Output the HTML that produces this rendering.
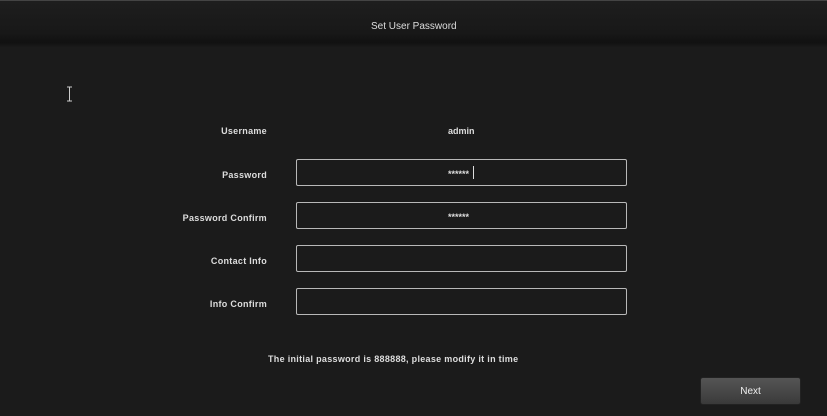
<!DOCTYPE html>
<html><head><style>
body{margin:0;width:827px;height:416px;background:#1b1b1b;font-family:"Liberation Sans",sans-serif;color:#ddd;position:relative;overflow:hidden;font-weight:bold;font-size:9px}
.hdr{position:absolute;left:0;top:0;width:827px;height:46px;background:linear-gradient(#1e1e1e,#181818 70%,#111 90%,#1a1a1a);border-top:1px solid #444}
.t{position:absolute;color:#ddd;white-space:nowrap}
.lbl{position:absolute;right:560px;text-align:right;letter-spacing:0.3px}
.box{position:absolute;left:296px;width:329px;height:25px;border:1px solid #b8b8b8;border-radius:2px;background:#1b1b1b}
.btn{position:absolute;left:700px;top:377px;width:99px;height:26px;border-radius:3px;background:linear-gradient(#555,#3a3a3a);border:1px solid #222;color:#eee;text-align:center;line-height:28px;font-weight:normal;font-size:10px}
</style></head><body>
<div class="hdr"></div>
<div class="t" style="left:371px;top:21px;font-weight:normal;font-size:10px">Set User Password</div>
<svg style="position:absolute;left:66px;top:86px" width="7" height="17"><path d="M1 1H6M3.5 1V15M1 15H6" stroke="#ccc" stroke-width="1" fill="none"/></svg>
<div class="lbl t" style="top:126px">Username</div>
<div class="t" style="left:448px;top:126px">admin</div>
<div class="lbl t" style="top:170px">Password</div>
<div class="box" style="top:159px"></div>
<div class="t" style="left:448px;top:169px">******</div>
<div class="t" style="left:473px;top:166px;width:1px;height:13px;background:#ddd"></div>
<div class="lbl t" style="top:213px">Password Confirm</div>
<div class="box" style="top:202px"></div>
<div class="t" style="left:448px;top:212px">******</div>
<div class="lbl t" style="top:256px">Contact Info</div>
<div class="box" style="top:245px"></div>
<div class="lbl t" style="top:299px">Info Confirm</div>
<div class="box" style="top:288px"></div>
<div class="t" style="left:268px;top:354px;letter-spacing:0.3px">The initial password is 888888, please modify it in time</div>
<div class="btn">Next</div>
</body></html>
